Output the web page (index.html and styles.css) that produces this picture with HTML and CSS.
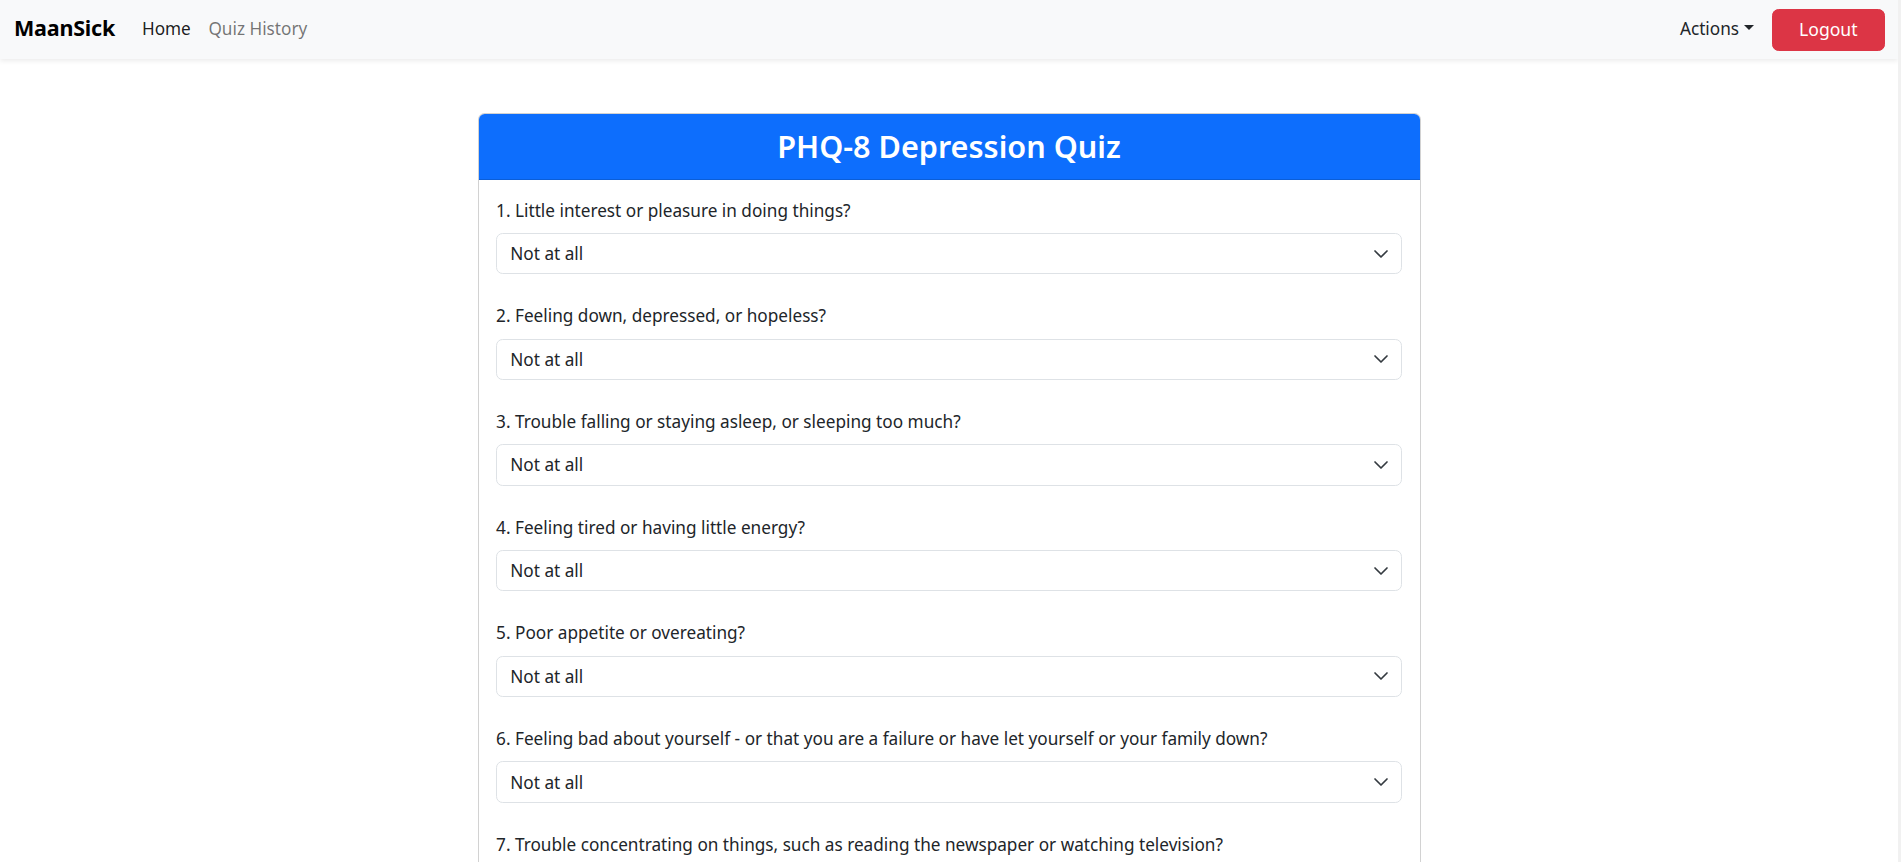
FILE: index.html
```html
<!DOCTYPE html>
<html lang="en">
<head>
<meta charset="utf-8">
<title>MaanSick - PHQ-8 Depression Quiz</title>
<link rel="stylesheet" href="styles.css">
</head>
<body>
<nav class="navbar">
  <div class="nav-left">
    <a class="brand" href="#">MaanSick</a>
    <a class="nav-link active" href="#">Home</a>
    <a class="nav-link" href="#">Quiz History</a>
  </div>
  <div class="nav-right">
    <a class="nav-link dark dropdown" href="#">Actions<span class="caret"></span></a>
    <button class="btn-logout" type="button">Logout</button>
  </div>
</nav>

<main class="container">
  <form class="card">
    <div class="card-header"><h2 class="title">PHQ-8 Depression Quiz</h2></div>
    <div class="card-body">
      <div class="question">
        <label class="q-label">1. Little interest or pleasure in doing things?</label>
        <div class="select-wrap"><select class="form-select"><option>Not at all</option><option>Several days</option><option>More than half the days</option><option>Nearly every day</option></select><svg class="chev" viewBox="0 0 16 16"><path d="M2 5l6 6 6-6"/></svg></div>
      </div>
      <div class="question">
        <label class="q-label">2. Feeling down, depressed, or hopeless?</label>
        <div class="select-wrap"><select class="form-select"><option>Not at all</option><option>Several days</option><option>More than half the days</option><option>Nearly every day</option></select><svg class="chev" viewBox="0 0 16 16"><path d="M2 5l6 6 6-6"/></svg></div>
      </div>
      <div class="question">
        <label class="q-label">3. Trouble falling or staying asleep, or sleeping too much?</label>
        <div class="select-wrap"><select class="form-select"><option>Not at all</option><option>Several days</option><option>More than half the days</option><option>Nearly every day</option></select><svg class="chev" viewBox="0 0 16 16"><path d="M2 5l6 6 6-6"/></svg></div>
      </div>
      <div class="question">
        <label class="q-label">4. Feeling tired or having little energy?</label>
        <div class="select-wrap"><select class="form-select"><option>Not at all</option><option>Several days</option><option>More than half the days</option><option>Nearly every day</option></select><svg class="chev" viewBox="0 0 16 16"><path d="M2 5l6 6 6-6"/></svg></div>
      </div>
      <div class="question">
        <label class="q-label">5. Poor appetite or overeating?</label>
        <div class="select-wrap"><select class="form-select"><option>Not at all</option><option>Several days</option><option>More than half the days</option><option>Nearly every day</option></select><svg class="chev" viewBox="0 0 16 16"><path d="M2 5l6 6 6-6"/></svg></div>
      </div>
      <div class="question">
        <label class="q-label">6. Feeling bad about yourself - or that you are a failure or have let yourself or your family down?</label>
        <div class="select-wrap"><select class="form-select"><option>Not at all</option><option>Several days</option><option>More than half the days</option><option>Nearly every day</option></select><svg class="chev" viewBox="0 0 16 16"><path d="M2 5l6 6 6-6"/></svg></div>
      </div>
      <div class="question">
        <label class="q-label">7. Trouble concentrating on things, such as reading the newspaper or watching television?</label>
        <div class="select-wrap"><select class="form-select"><option>Not at all</option><option>Several days</option><option>More than half the days</option><option>Nearly every day</option></select><svg class="chev" viewBox="0 0 16 16"><path d="M2 5l6 6 6-6"/></svg></div>
      </div>
      <div class="question">
        <label class="q-label">8. Moving or speaking so slowly that other people could have noticed? Or the opposite - being so fidgety or restless that you have been moving around a lot more than usual?</label>
        <div class="select-wrap"><select class="form-select"><option>Not at all</option><option>Several days</option><option>More than half the days</option><option>Nearly every day</option></select><svg class="chev" viewBox="0 0 16 16"><path d="M2 5l6 6 6-6"/></svg></div>
      </div>
      <button class="btn-submit" type="submit">Submit</button>
    </div>
  </form>
</main>
</body>
</html>
```

FILE: styles.css
```css
html {
  overflow: hidden;
  background: #f1f1f1;
}
body {
  margin: 0 3px 0 0;
  background: #ffffff;
  font-family: "Noto Sans", "Open Sans", "DejaVu Sans", sans-serif;
  font-size: 17.2px;
  line-height: 1.5;
  color: #212529;
  min-height: 862px;
}
a { text-decoration: none; }

.navbar {
  height: 59px;
  box-sizing: border-box;
  padding: 0 13px 2px 14px;
  background: #f8f9fa;
  box-shadow: 0 2px 5px rgba(0, 0, 0, 0.08);
  display: flex;
  align-items: center;
  justify-content: space-between;
  position: relative;
}
.nav-left, .nav-right {
  display: flex;
  align-items: center;
}
.brand {
  font-size: 21.5px;
  font-weight: 700;
  color: #000;
  margin-right: 18px;
  letter-spacing: -0.2px;
}
.nav-link {
  padding: 8.8px;
  color: rgba(0, 0, 0, 0.55);
}
.nav-link.active { color: rgba(0, 0, 0, 0.9); }
.nav-link.dark { color: #212529; }
.dropdown {
  display: flex;
  align-items: center;
}
.caret {
  display: inline-block;
  margin-left: 5px;
  width: 0;
  height: 0;
  border-top: 5.5px solid #212529;
  border-left: 5px solid transparent;
  border-right: 5px solid transparent;
  margin-top: -2px;
}
.btn-logout {
  margin-left: 8.8px;
  margin-top: 2px;
  height: 42px;
  padding: 0 26.4px;
  border: 1px solid #dc3545;
  background: #dc3545;
  color: #ffffff;
  border-radius: 6.6px;
  font-family: inherit;
  font-size: 17.6px;
  line-height: 1.5;
}

.container {
  width: 943px;
  margin: 54px auto 40px;
}
.card {
  display: flex;
  flex-direction: column;
  border: 1px solid rgba(0, 0, 0, 0.175);
  border-radius: 6.6px;
  background: #fff;
  overflow: hidden;
}
.card-header {
  background: #0d6efd;
  color: #fff;
  border-bottom: 1px solid #0b5ed7;
  height: 66px;
  box-sizing: border-box;
  display: flex;
  align-items: center;
  justify-content: center;
}
.title {
  margin: 0;
  font-size: 30.6px;
  font-weight: 600;
  line-height: 1.2;
}
.card-body {
  padding: 17.6px;
  display: flex;
  flex-direction: column;
}
.question {
  display: flex;
  flex-direction: column;
  margin-bottom: 29px;
}
.q-label {
  margin-bottom: 8.8px;
  line-height: 26.4px;
}
.select-wrap {
  position: relative;
}
.form-select {
  width: 100%;
  height: 41.5px;
  box-sizing: border-box;
  appearance: none;
  -webkit-appearance: none;
  background: #fff;
  border: 1px solid #dee2e6;
  border-radius: 6.6px;
  padding: 0 40px 0 13.2px;
  font-family: inherit;
  font-size: 17.2px;
  color: #212529;
}
.chev {
  position: absolute;
  right: 13px;
  top: 50%;
  width: 16px;
  height: 16px;
  margin-top: -8px;
  fill: none;
  stroke: #343a40;
  stroke-width: 1.7;
  stroke-linecap: round;
  stroke-linejoin: round;
  pointer-events: none;
}
.btn-submit {
  align-self: flex-start;
  padding: 6.6px 13.2px;
  border: 1px solid #0d6efd;
  background: #0d6efd;
  color: #fff;
  border-radius: 6.6px;
  font-family: inherit;
  font-size: 17.6px;
}
```
